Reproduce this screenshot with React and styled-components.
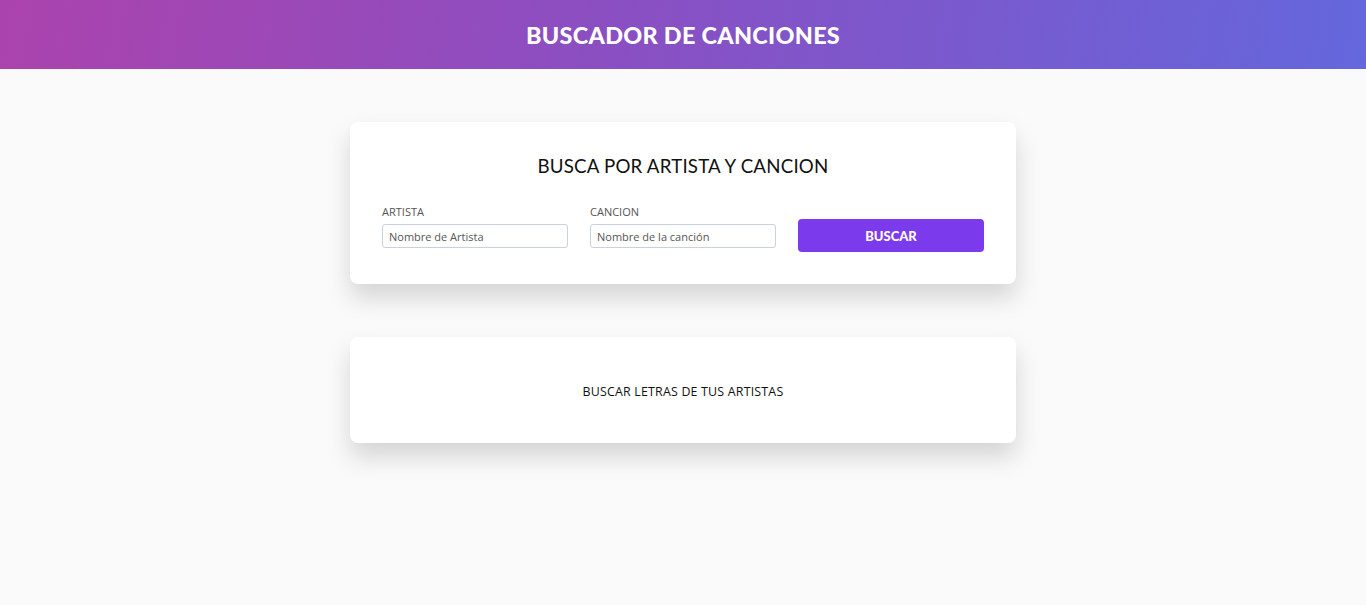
import React from "react";
import styled, { createGlobalStyle } from "styled-components";

const Global = createGlobalStyle`
  html, body { margin: 0; padding: 0; background: #fafafa; }
  body { font-family: "Open Sans", "Liberation Sans", sans-serif; }
  * { box-sizing: border-box; }
`;

const Header = styled.header`
  height: 69px;
  background: linear-gradient(100deg, #ab43ad 0%, #8a4fc2 45%, #6467dc 100%);
  display: flex;
  align-items: center;
  justify-content: center;
`;

const HeaderTitle = styled.h1`
  margin: 0;
  color: #fff;
  font-family: "Lato", "Liberation Sans", sans-serif;
  font-weight: 900;
  font-size: 23.4px;
  letter-spacing: 0.3px;
`;

const Main = styled.main`
  display: flex;
  flex-direction: column;
  align-items: center;
  padding: 53px 0 80px;
  gap: 53px;
`;

const Card = styled.section`
  width: 666px;
  background: #fff;
  border-radius: 8px;
  box-shadow: 0 14px 24px rgba(0, 0, 0, 0.15);
  padding: ${(p) => p.$pad};
`;

const CardTitle = styled.h2`
  margin: 0 0 28px;
  text-align: center;
  font-family: "Lato", "Liberation Sans", sans-serif;
  font-weight: 400;
  font-size: 18.7px;
  color: #111;
  letter-spacing: 0.2px;
`;

const FormGrid = styled.form`
  display: grid;
  grid-template-columns: repeat(3, 186px);
  column-gap: 22px;
  align-items: end;
`;

const Field = styled.label`
  display: flex;
  flex-direction: column;
  gap: 5px;
  margin-bottom: 4px;
`;

const Label = styled.span`
  font-size: 11px;
  color: #555;
  line-height: 14px;
`;

const Input = styled.input`
  width: 186px;
  height: 24px;
  border: 1px solid #c9d2dc;
  border-radius: 3px;
  padding: 0 6px;
  font-family: "Open Sans", "Liberation Sans", sans-serif;
  font-size: 11px;
  color: #333;
  &::placeholder { color: #555; }
  outline: none;
`;

const Button = styled.button`
  height: 33px;
  border: none;
  border-radius: 4px;
  background: #7c3aed;
  color: #fff;
  font-family: "Lato", "Liberation Sans", sans-serif;
  font-weight: 900;
  font-size: 13px;
  cursor: pointer;
`;

const Message = styled.p`
  margin: 0;
  text-align: center;
  font-size: 12.4px;
  color: #111;
  letter-spacing: 0.2px;
`;

export default function App() {
  return (
    <>
      <Global />
      <Header>
        <HeaderTitle>BUSCADOR DE CANCIONES</HeaderTitle>
      </Header>
      <Main>
        <Card $pad="33px 32px 32px">
          <CardTitle>BUSCA POR ARTISTA Y CANCION</CardTitle>
          <FormGrid onSubmit={(e) => e.preventDefault()}>
            <Field>
              <Label>ARTISTA</Label>
              <Input placeholder="Nombre de Artista" />
            </Field>
            <Field>
              <Label>CANCION</Label>
              <Input placeholder="Nombre de la canción" />
            </Field>
            <Button type="submit">BUSCAR</Button>
          </FormGrid>
        </Card>
        <Card $pad="46px 32px 43px">
          <Message>BUSCAR LETRAS DE TUS ARTISTAS</Message>
        </Card>
      </Main>
    </>
  );
}
